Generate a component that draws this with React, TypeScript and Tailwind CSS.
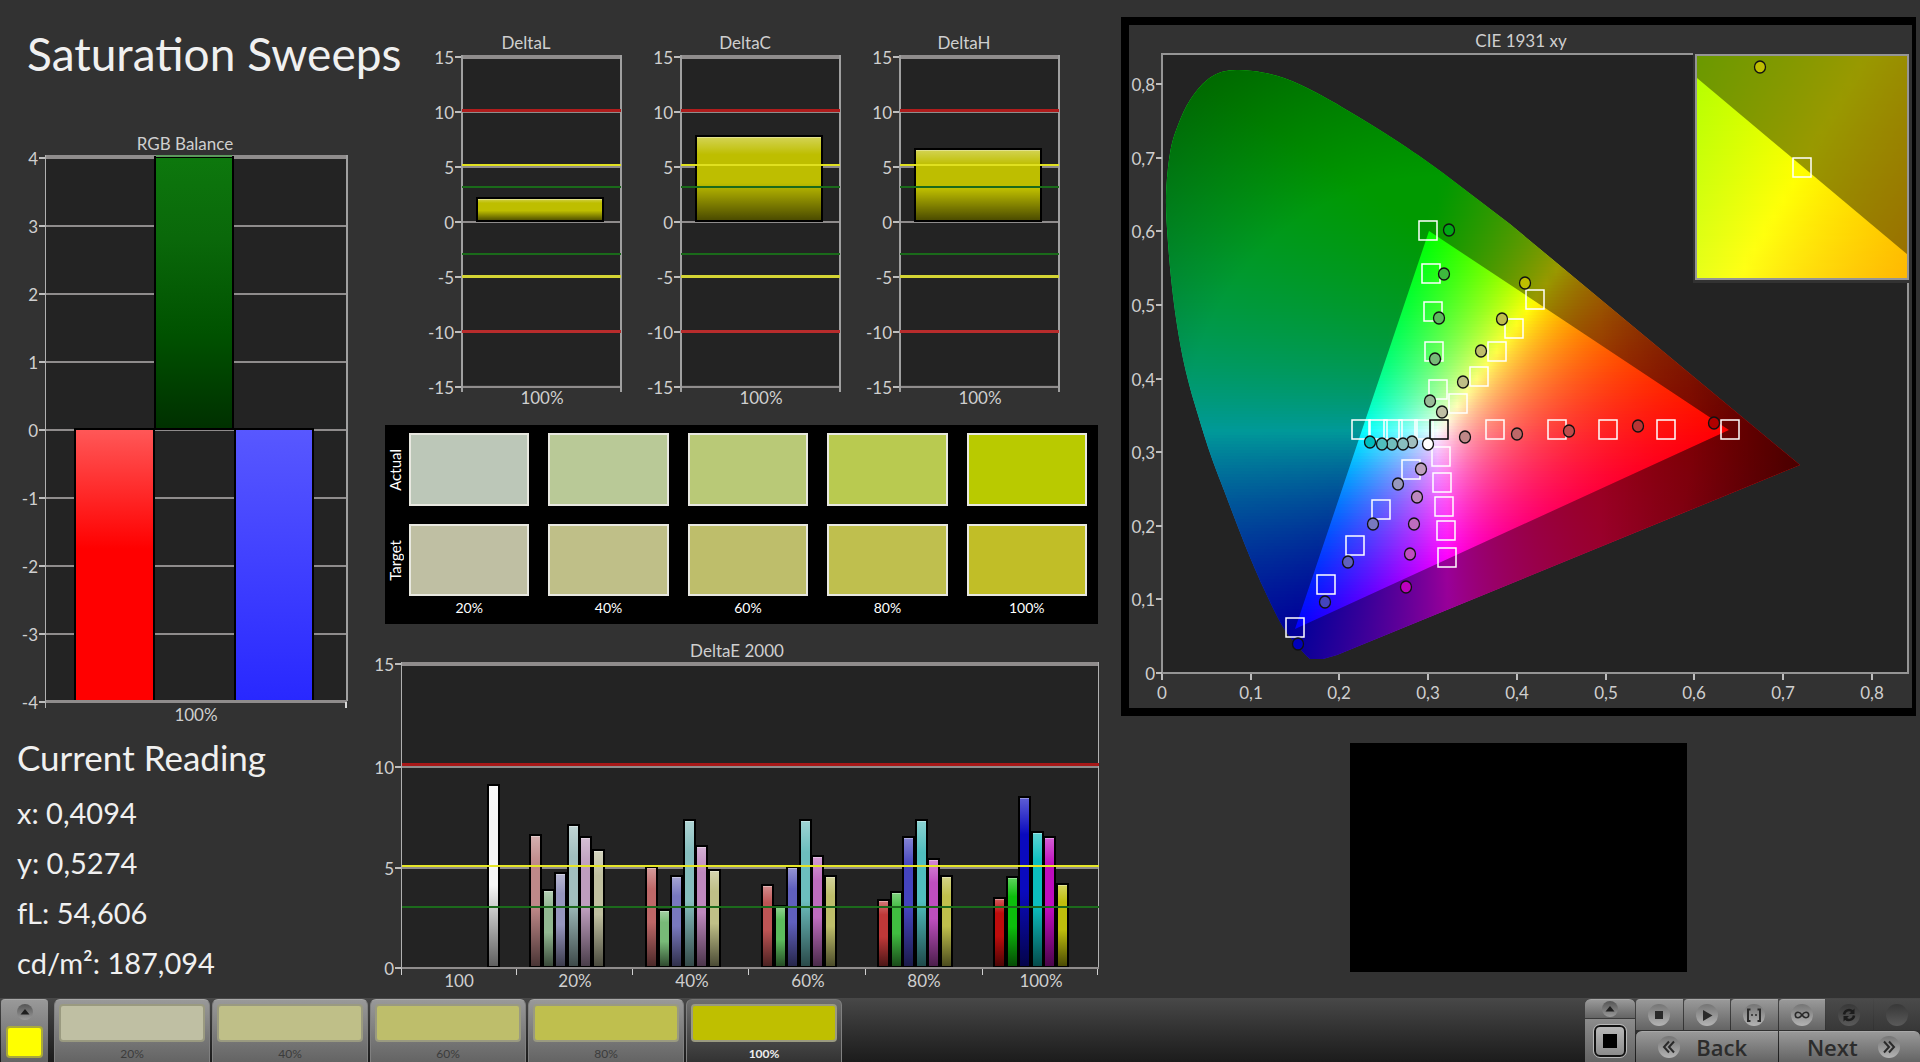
import React from "react";

type Point = [number, number];

/* ---------- shared chart pieces ---------- */

const AXIS = "#8f8c8c";
const PLOT = "#232323";

function ChartDefs() {
  return (
    <defs>
      <linearGradient id="gloss" x1="0" y1="0" x2="0" y2="1">
        <stop offset="0" stopColor="#fff" stopOpacity="0.35" />
        <stop offset="0.22" stopColor="#fff" stopOpacity="0" />
        <stop offset="0.55" stopColor="#000" stopOpacity="0" />
        <stop offset="1" stopColor="#000" stopOpacity="0.62" />
      </linearGradient>
      <linearGradient id="greenBar" x1="0" y1="0" x2="0" y2="1">
        <stop offset="0" stopColor="#0d780d" />
        <stop offset="0.3" stopColor="#0a680a" />
        <stop offset="0.65" stopColor="#005200" />
        <stop offset="1" stopColor="#003000" />
      </linearGradient>
      <linearGradient id="redBar" x1="0" y1="0" x2="0" y2="1">
        <stop offset="0" stopColor="#ff5858" />
        <stop offset="0.44" stopColor="#ff0000" />
        <stop offset="1" stopColor="#ff0000" />
      </linearGradient>
      <linearGradient id="blueBar" x1="0" y1="0" x2="0" y2="1">
        <stop offset="0" stopColor="#5858ff" />
        <stop offset="1" stopColor="#2828ff" />
      </linearGradient>
    </defs>
  );
}

function Bar({ x, y, w, bottom, color }: { x: number; y: number; w: number; bottom: number; color: string }) {
  return (
    <g>
      <rect x={x} y={y} width={w} height={bottom - y} fill={color} />
      <rect x={x} y={y} width={w} height={bottom - y} fill="url(#gloss)" stroke="#000" strokeWidth="2" />
      <rect x={x + 1} y={y + 1} width={w - 2} height="1" fill="#fff" opacity="0.35" />
    </g>
  );
}

function YLabel({ x, y, children }: { x: number; y: number; children: React.ReactNode }) {
  return (
    <g>
      <text x={x - 8} y={y + 7} textAnchor="end">
        {children}
      </text>
      <rect x={x - 7} y={y - 1} width="7" height="2" fill="#bdbdbd" />
    </g>
  );
}

/* ---------- RGB balance ---------- */

function RgbBalance() {
  const zero = 430;
  const step = 68;
  const ticks = [4, 3, 2, 1, 0, -1, -2, -3, -4];
  return (
    <svg viewBox="0 130 372 600" className="block w-full fill-[#cfcfcf] text-[17px]" role="img" aria-label="RGB Balance">
      <text x="185" y="150" textAnchor="middle">
        RGB Balance
      </text>
      <rect x="46" y="157" width="301" height="545" fill={PLOT} />
      {ticks.map((t) => (
        <g key={t}>
          <rect x="46" y={zero - t * step - 1} width="301" height="2" fill={AXIS} />
          <YLabel x={46} y={zero - t * step}>
            {t}
          </YLabel>
        </g>
      ))}
      <rect x="46" y="155" width="301" height="3" fill={AXIS} />
      <rect x="155" y="157" width="78" height="272" fill="url(#greenBar)" stroke="#000" strokeWidth="2" />
      <rect x="156" y="155" width="76" height="2" fill="#5d9a5d" />
      <rect x="75" y="429" width="79" height="272" fill="url(#redBar)" stroke="#000" strokeWidth="2" />
      <rect x="235" y="429" width="78" height="272" fill="url(#blueBar)" stroke="#000" strokeWidth="2" />
      <rect x="45" y="155" width="1" height="553" fill="#b0b0b0" />
      <rect x="346" y="155" width="2" height="546" fill="#a0a0a0" />
      <rect x="345" y="700" width="2" height="8" fill="#d8d8d8" />
      <rect x="46" y="700" width="301" height="2" fill={AXIS} />
      <text x="196" y="721" textAnchor="middle">
        100%
      </text>
    </svg>
  );
}

/* ---------- DeltaL / DeltaC / DeltaH ---------- */

function DeltaPlot({ x, title, top }: { x: number; title: string; top: number }) {
  const ticks = [15, 10, 5, 0, -5, -10, -15];
  return (
    <g>
      <text x={x + 64} y="49" textAnchor="middle">
        {title}
      </text>
      <rect x={x} y="56" width="159" height="329" fill={PLOT} />
      {ticks.map((t) => (
        <g key={t}>
          <rect x={x} y={222 - t * 11 - 1} width="159" height="2" fill={AXIS} />
          <YLabel x={x} y={222 - t * 11}>
            {t}
          </YLabel>
        </g>
      ))}
      <rect x={x} y="55" width="159" height="4" fill={AXIS} />
      <rect x={x - 1} y="55" width="2" height="337" fill="#a0a0a0" />
      <rect x={x + 158} y="55" width="2" height="337" fill="#a0a0a0" />
      <Bar x={x + 15} y={top} w={126} bottom={221} color="#bebe00" />
      <rect x={x} y="109" width="159" height="3" fill="#b01c1c" />
      <rect x={x} y="164" width="159" height="2" fill="#e0e020" />
      <rect x={x} y="186" width="159" height="2" fill="#1a6a1a" />
      <rect x={x} y="253" width="159" height="2" fill="#1a6a1a" />
      <rect x={x} y="275" width="159" height="3" fill="#d4d434" />
      <rect x={x} y="330" width="159" height="3" fill="#b82c2c" />
      <text x={x + 80} y="404" textAnchor="middle">
        100%
      </text>
    </g>
  );
}

function DeltaCharts() {
  return (
    <svg viewBox="372 0 748 425" className="block w-full fill-[#cfcfcf] text-[17px]" role="img" aria-label="DeltaL, DeltaC and DeltaH">
      <ChartDefs />
      <DeltaPlot x={462} title="DeltaL" top={198} />
      <DeltaPlot x={681} title="DeltaC" top={136} />
      <DeltaPlot x={900} title="DeltaH" top={149} />
    </svg>
  );
}

/* ---------- colour swatches ---------- */

const LEVELS = ["20%", "40%", "60%", "80%", "100%"];
const ACTUAL = ["bg-[#bcc7b8]", "bg-[#b9c997]", "bg-[#b9c977]", "bg-[#b9ca50]", "bg-[#b9ca00]"];
const TARGET = ["bg-[#bfbfa3]", "bg-[#bfbf88]", "bg-[#bebe6b]", "bg-[#bfbf4e]", "bg-[#c1be27]"];

function SwatchRow({ label, colors, height }: { label: string; colors: string[]; height: string }) {
  return (
    <div className="flex items-center">
      <div className="flex w-6 justify-center pr-1">
        <span className="rotate-180 text-[15px] leading-4 [writing-mode:vertical-rl]">{label}</span>
      </div>
      <div className="grid flex-1 grid-cols-5 gap-[19px]">
        {colors.map((c) => (
          <div key={c} className={`border-2 border-[#e8e8e0] ${height} ${c}`} />
        ))}
      </div>
    </div>
  );
}

function Swatches() {
  return (
    <section className="mr-[22px] ml-[13px] flex h-[199px] flex-col bg-black pt-2 pr-[11px] text-white">
      <SwatchRow label="Actual" colors={ACTUAL} height="h-[73px]" />
      <div className="h-[18px]" />
      <SwatchRow label="Target" colors={TARGET} height="h-[72px]" />
      <div className="ml-6 grid grid-cols-5 gap-[19px] text-center text-sm leading-6">
        {LEVELS.map((l) => (
          <span key={l}>{l}</span>
        ))}
      </div>
    </section>
  );
}

/* ---------- DeltaE 2000 ---------- */

const GROUPS: { x: number; tops: number[]; colors: string[] }[] = [
  { x: 530, tops: [835, 890, 873, 825, 837, 850], colors: ["#be8888", "#91b891", "#9696be", "#a0bebe", "#be9ebe", "#bfbf9f"] },
  { x: 646, tops: [867, 910, 876, 820, 846, 870], colors: ["#be6868", "#78ba78", "#7878be", "#86bebe", "#be88be", "#bfbf87"] },
  { x: 762, tops: [885, 906, 867, 820, 856, 876], colors: ["#be5454", "#5cbc5c", "#6060be", "#6cbebe", "#be6cbe", "#bebe6a"] },
  { x: 878, tops: [900, 892, 837, 820, 859, 876], colors: ["#be3838", "#40bc40", "#4444be", "#50bebe", "#be4ebe", "#bfbf4c"] },
  { x: 994, tops: [898, 877, 797, 832, 837, 884], colors: ["#be0c0c", "#0cbe0c", "#0a0abe", "#0cbebe", "#be0cbe", "#bebe0c"] },
];

function DeltaE() {
  const ticks: Point[] = [
    [15, 664],
    [10, 767],
    [5, 868],
    [0, 968],
  ];
  return (
    <svg viewBox="372 624 748 374" className="block w-full fill-[#cfcfcf] text-[17px]" role="img" aria-label="DeltaE 2000">
      <text x="737" y="657" textAnchor="middle">
        DeltaE 2000
      </text>
      <rect x="402" y="664" width="697" height="304" fill={PLOT} />
      {ticks.map(([t, y]) => (
        <g key={t}>
          <rect x="402" y={y - 1} width="697" height="2" fill={AXIS} />
          <YLabel x={402} y={y}>
            {t}
          </YLabel>
        </g>
      ))}
      <rect x="402" y="662" width="697" height="4" fill={AXIS} />
      <rect x="401" y="662" width="1" height="306" fill="#b0b0b0" />
      <rect x="1098" y="662" width="1" height="306" fill="#b0b0b0" />
      <Bar x={488} y={785} w={11} bottom={967} color="#f6f6f6" />
      {GROUPS.map((g) =>
        g.tops.map((top, i) => (
          <Bar key={`${g.x}-${i}`} x={g.x + Math.round(i * 12.6)} y={top} w={11} bottom={967} color={g.colors[i]} />
        )),
      )}
      <rect x="402" y="967" width="697" height="2" fill={AXIS} />
      <rect x="402" y="763" width="697" height="3" fill="#a81818" />
      <rect x="402" y="865" width="697" height="2" fill="#e6e628" />
      <rect x="402" y="906" width="697" height="2" fill="#1c6a1c" />
      {[402, 517, 633, 749, 866, 983, 1098].map((x) => (
        <rect key={x} x={x - 1} y="969" width="1" height="6" fill="#d0d0d0" />
      ))}
      {["100", ...LEVELS].map((l, i) => (
        <text key={l} x={459 + Math.round(i * 116.3)} y="987" textAnchor="middle">
          {l}
        </text>
      ))}
    </svg>
  );
}

/* ---------- CIE 1931 ---------- */

function chromaColor(x: number, y: number): string {
  const Y = Math.max(y, 0.001);
  const z = 1 - x - y;
  const lin = [
    3.2406 * x - 1.5372 * Y - 0.4986 * z,
    -0.9689 * x + 1.8758 * Y + 0.0415 * z,
    0.0557 * x - 0.204 * Y + 1.057 * z,
  ].map((v) => Math.max(v, 0));
  const top = Math.max(...lin);
  const [r, g, b] = lin.map((v) => Math.round((255 * v) / top));
  return `rgb(${r},${g},${b})`;
}

interface FieldProps {
  id: string;
  x0: number;
  x1: number;
  y0: number;
  y1: number;
  toXY: (px: number, py: number) => Point;
}

const ROW = 3;

/* Chromaticity field painted as thin rows, each with its own gradient. */
function ChromaField({ id, x0, x1, y0, y1, toXY }: FieldProps) {
  const rows: number[] = [];
  for (let y = y0; y < y1; y += ROW) rows.push(y);
  const count = Math.ceil((x1 - x0) / 10);
  const stops = Array.from({ length: count + 1 }, (_, i) => i / count);
  return (
    <g shapeRendering="crispEdges">
      {rows.map((y) => (
        <React.Fragment key={y}>
          <linearGradient id={`${id}${y}`} x1="0" x2="1" y1="0" y2="0">
            {stops.map((s) => {
              const [cx, cy] = toXY(x0 + s * (x1 - x0), y + ROW / 2);
              return <stop key={s} offset={s} stopColor={chromaColor(cx, cy)} />;
            })}
          </linearGradient>
          <rect x={x0} y={y} width={x1 - x0} height={Math.min(ROW, y1 - y)} fill={`url(#${id}${y})`} />
        </React.Fragment>
      ))}
    </g>
  );
}

const LOCUS: Point[] = [
  [1310, 659], [1302, 651], [1283, 627], [1263, 587], [1245, 545], [1225, 493], [1210, 453], [1195, 405],
  [1187, 376], [1180, 343], [1173, 296], [1168, 243], [1166, 197], [1170, 153], [1178, 125], [1190, 100],
  [1207, 80], [1226, 71], [1253, 71], [1284, 78], [1317, 93], [1357, 116], [1397, 141], [1443, 173],
  [1510, 224], [1700, 382], [1800, 465], [1337, 655], [1323, 659],
];

function locusPath(): string {
  let d = `M${LOCUS[0][0]} ${LOCUS[0][1]}`;
  for (let i = 1; i < LOCUS.length; i++) {
    const p0 = LOCUS[Math.max(i - 2, 0)];
    const p1 = LOCUS[i - 1];
    const p2 = LOCUS[i];
    const p3 = LOCUS[Math.min(i + 1, LOCUS.length - 1)];
    if (i >= 24) {
      d += `L${p2[0]} ${p2[1]}`;
    } else {
      d += `C${p1[0] + (p2[0] - p0[0]) / 6} ${p1[1] + (p2[1] - p0[1]) / 6} ${p2[0] - (p3[0] - p1[0]) / 6} ${p2[1] - (p3[1] - p1[1]) / 6} ${p2[0]} ${p2[1]}`;
    }
  }
  return d + "Z";
}

const TARGETS: Point[] = [
  [1428, 230], [1431, 273], [1433, 311], [1434, 351], [1438, 389],
  [1535, 299], [1514, 328], [1497, 351], [1479, 376], [1458, 403],
  [1361, 429], [1378, 429], [1393, 429], [1408, 429], [1424, 429],
  [1495, 429], [1557, 429], [1608, 429], [1666, 429], [1730, 429],
  [1411, 469], [1381, 509], [1355, 545], [1326, 584], [1295, 627],
  [1441, 456], [1442, 482], [1444, 506], [1446, 530], [1447, 557],
];

const READINGS: [number, number, string][] = [
  [1449, 230, "#00a814"], [1444, 274, "#3eb83e"], [1439, 318, "#5cba5c"], [1435, 359, "#78ba78"], [1430, 401, "#98ba98"],
  [1525, 283, "#bebe00"], [1502, 319, "#bebe4c"], [1481, 351, "#bebe6a"], [1463, 382, "#bebe86"], [1442, 412, "#bebea4"],
  [1412, 442, "#a0bebe"], [1403, 444, "#88bebe"], [1392, 444, "#70bebe"], [1382, 444, "#50bebe"], [1370, 442, "#00bebe"],
  [1465, 437, "#be8888"], [1517, 434, "#be6868"], [1569, 431, "#be4c4c"], [1638, 426, "#b83434"], [1714, 423, "#b00000"],
  [1398, 484, "#9898be"], [1373, 524, "#7878be"], [1348, 562, "#6060be"], [1325, 602, "#4444be"], [1298, 644, "#0000b8"],
  [1421, 469, "#bea0be"], [1417, 497, "#be88be"], [1414, 524, "#be6cbe"], [1410, 554, "#be4ebe"], [1406, 587, "#be00be"],
  [1428, 444, "#ffffff"],
];

function Target({ x, y, color = "#fff" }: { x: number; y: number; color?: string }) {
  return <rect x={x - 9} y={y - 9} width="18" height="19" fill="none" stroke={color} strokeWidth="1.5" />;
}

function Reading({ x, y, color }: { x: number; y: number; color: string }) {
  return <ellipse cx={x} cy={y} rx="5.5" ry="6" fill={color} stroke="#111" strokeWidth="1.3" />;
}

function CieChart() {
  const locus = locusPath();
  const tenths = [0, 1, 2, 3, 4, 5, 6, 7, 8];
  const name = (t: number) => (t === 0 ? "0" : `0,${t}`);
  return (
    <svg viewBox="1129 25 783 683" className="block w-full fill-[#cfcfcf] text-[17px]" role="img" aria-label="CIE 1931 xy">
      <defs>
        <clipPath id="locus">
          <path d={locus} />
        </clipPath>
        <radialGradient id="shade" gradientUnits="userSpaceOnUse" cx="1440" cy="430" r="460">
          <stop offset="0" stopOpacity="0.4" />
          <stop offset="0.55" stopOpacity="0.4" />
          <stop offset="1" stopOpacity="0.63" />
        </radialGradient>
        <linearGradient id="redShade" gradientUnits="userSpaceOnUse" x1="1600" x2="1800" y1="0" y2="0">
          <stop offset="0" stopOpacity="0" />
          <stop offset="1" stopOpacity="0.4" />
        </linearGradient>
      </defs>
      <text x="1521" y="47" textAnchor="middle">
        CIE 1931 xy
      </text>
      <rect x="1162" y="54" width="746" height="619" fill={PLOT} stroke="#959595" strokeWidth="2" />
      <g clipPath="url(#locus)">
        <ChromaField id="cie" x0={1160} x1={1804} y0={69} y1={663} toXY={(px, py) => [(px - 1162) / 886, (673 - py) / 736]} />
        <path d={`${locus}M1429 231L1729 430L1295 629Z`} fillRule="evenodd" fill="url(#shade)" />
        <path d={`${locus}M1429 231L1729 430L1295 629Z`} fillRule="evenodd" fill="url(#redShade)" />
      </g>
      {TARGETS.map(([x, y]) => (
        <Target key={`${x}-${y}`} x={x} y={y} />
      ))}
      <Target x={1439} y={429} color="#000" />
      {READINGS.map(([x, y, c]) => (
        <Reading key={`${x}-${y}`} x={x} y={y} color={c} />
      ))}

      {tenths.map((t) => (
        <g key={t}>
          <text x="1155" y={680 - Math.round(t * 73.6)} textAnchor="end">
            {name(t)}
          </text>
          <rect x="1156" y={672 - Math.round(t * 73.6)} width="6" height="2" fill="#bdbdbd" />
          <text x={1162 + Math.round(t * 88.7)} y="699" textAnchor="middle">
            {name(t)}
          </text>
          <rect x={1161 + Math.round(t * 88.7)} y="674" width="2" height="6" fill="#bdbdbd" />
        </g>
      ))}

      <rect x="1693" y="52" width="217" height="231" fill="#323232" />
      <ChromaField
        id="zoom"
        x0={1697}
        x1={1908}
        y0={56}
        y1={278}
        toXY={(px, py) => [0.4193 + (px - 1802) / 4313, 0.5053 - (py - 167) / 4530]}
      />
      <path d="M1697 56H1908V255L1697 78Z" fillOpacity="0.4" fill="#000" />
      <rect x="1696" y="55" width="212" height="224" fill="none" stroke="#959595" strokeWidth="2" />
      <Target x={1802} y={167} />
      <Reading x={1760} y={67} color="#bebe00" />
    </svg>
  );
}

/* ---------- bottom bar ---------- */

function Knob({ children, dim = false }: { children?: React.ReactNode; dim?: boolean }) {
  return (
    <span
      className={`flex size-[22px] items-center justify-center rounded-full ${
        dim ? "bg-linear-to-b from-[#383838] to-[#5a5a5a] text-[#1c1c1c]" : "bg-linear-to-b from-[#757575] to-[#b4b4b4] text-[#2a2a2a]"
      }`}
    >
      <svg viewBox="0 0 22 22" className="size-[22px]" fill="none" stroke="currentColor" strokeWidth="2">
        {children}
      </svg>
    </span>
  );
}

function UpKnob() {
  return (
    <span className="flex size-4 items-center justify-center rounded-full bg-linear-to-b from-[#555] to-[#9a9a9a]">
      <svg viewBox="0 0 16 16" className="size-4">
        <path d="M3.500 10.500L8 5L12.500 10.500Z" fill="#1e1e1e" />
      </svg>
    </span>
  );
}

const PATCHES = [
  { label: "20%", color: "bg-[#bfbfa3]" },
  { label: "40%", color: "bg-[#bfbf88]" },
  { label: "60%", color: "bg-[#bebe6b]" },
  { label: "80%", color: "bg-[#bfbf4e]" },
  { label: "100%", color: "bg-[#bfbf00]" },
];

const RAISED = "border-t border-[#a8a8a8] bg-linear-to-b from-[#999] to-[#646464]";

function Toolbar() {
  const transport: { name: string; icon: React.ReactNode; dim?: boolean }[] = [
    { name: "Stop", icon: <path d="M7 7h8v8H7Z" fill="currentColor" stroke="none" /> },
    { name: "Play", icon: <path d="M7 6L16.500 11.500L7 17Z" fill="currentColor" stroke="none" /> },
    {
      name: "Measure range",
      icon: (
        <>
          <path d="M7.500 5.500H5V17h2.500M14.500 5.500H17V17h-2.500" />
          <path d="M8 11h2M12 11h2" strokeWidth="1.500" />
        </>
      ),
    },
    {
      name: "Loop",
      icon: (
        <path
          d="M11 11C9.500 9 8.500 8.300 7 8.300a2.700 2.700 0 0 0 0 5.400c1.500 0 2.500-.700 4-2.700s2.500-2.700 4-2.700a2.700 2.700 0 0 1 0 5.400c-1.500 0-2.500-.700-4-2.700Z"
          strokeWidth="1.600"
        />
      ),
    },
    {
      name: "Refresh",
      dim: true,
      icon: (
        <>
          <path d="M6 10.500a5 5 0 0 1 8.500-3M16 11.500a5 5 0 0 1-8.500 3" strokeWidth="2.500" />
          <path d="M16.500 4.500v5.500h-5.500ZM5.500 17.500V12H11Z" fill="currentColor" stroke="none" />
        </>
      ),
    },
    { name: "Record", dim: true, icon: null },
  ];
  return (
    <footer className="flex h-16 justify-between bg-linear-to-b from-[#484848] to-[#1c1c1c] pt-px">
      <div className="flex gap-[2px] pl-px">
        <button
          aria-label="Current color"
          className={`mr-1 flex w-[47px] flex-col items-center justify-between rounded-t-sm pt-1 pb-1 ${RAISED}`}
        >
          <UpKnob />
          <span className="h-8 w-[37px] rounded-sm border-2 border-[#a9a93c] bg-[#ffff00]" />
        </button>
        {PATCHES.map((p, i) => (
          <button
            key={p.label}
            className={`flex w-[156px] flex-col items-center rounded-t-md border-x border-x-[#808080] pt-1 ${
              i === 4
                ? "border-t border-[#777] bg-linear-to-b from-[#6e6e6e] to-[#333] font-bold text-[#eee]"
                : `text-[#3c3c3c] ${RAISED}`
            }`}
          >
            <span className={`h-[38px] w-[146px] rounded-sm border-2 border-[#9a9a80] ${p.color}`} />
            <span className="mt-1 text-xs leading-4">{p.label}</span>
          </button>
        ))}
      </div>
      <div className="flex gap-px">
        <div className="flex w-[50px] flex-col gap-px">
          <button aria-label="Expand" className={`flex h-[19px] items-center justify-center rounded-t-md ${RAISED}`}>
            <UpKnob />
          </button>
          <button aria-label="Pattern window" className="flex flex-1 items-center justify-center bg-linear-to-b from-[#8c8c8c] to-[#646464]">
            <span className="flex size-8 items-center justify-center rounded-md border-2 border-[#111] bg-linear-to-b from-[#b8b8b8] to-[#8c8c8c] outline outline-[#b8b8b8]">
              <span className="size-[14px] bg-black" />
            </span>
          </button>
        </div>
        <div className="flex w-[284px] flex-col gap-px">
          <div className="grid h-[31px] grid-cols-6 gap-px">
            {transport.map((t) => (
              <button
                key={t.name}
                aria-label={t.name}
                className={`flex items-center justify-center ${
                  t.dim ? "bg-linear-to-b from-[#4a4a4a] to-[#383838]" : `rounded-tl-sm ${RAISED}`
                }`}
              >
                <Knob dim={t.dim}>{t.icon}</Knob>
              </button>
            ))}
          </div>
          <div className="grid flex-1 grid-cols-2 gap-px font-['Open_Sans',sans-serif] text-[22px] leading-7 font-semibold text-[#2c2c2c]">
            <button className={`flex items-center justify-center gap-4 rounded-tl-md pr-2 ${RAISED}`}>
              <Knob>
                <path d="M11 5.500L6 11L11 16.500M16 5.500L11 11L16 16.500" />
              </Knob>
              Back
            </button>
            <button className={`flex items-center justify-center gap-5 rounded-tr-md pl-2 ${RAISED}`}>
              Next
              <Knob>
                <path d="M6 5.500L11 11L6 16.500M11 5.500L16 11L11 16.500" />
              </Knob>
            </button>
          </div>
        </div>
      </div>
    </footer>
  );
}

/* ---------- page ---------- */

export default function App() {
  return (
    <div className="flex min-h-screen flex-col bg-[#323232] font-[Lato,'Liberation_Sans',sans-serif] text-[#f0f0f0]">
      <main className="grid flex-1 grid-cols-[minmax(0,372fr)_minmax(0,748fr)_minmax(0,800fr)] items-start">
        <div>
          <h1 className="pt-[22px] pb-11 pl-[27px] text-[46px] leading-16 whitespace-nowrap">Saturation Sweeps</h1>
          <RgbBalance />
          <section className="pl-[17px] text-[29px] leading-[50px] whitespace-nowrap">
            <h2 className="pb-1 text-[35px] leading-[54px]">Current Reading</h2>
            <p>x: 0,4094</p>
            <p>y: 0,5274</p>
            <p>fL: 54,606</p>
            <p>cd/m²: 187,094</p>
          </section>
        </div>
        <div>
          <DeltaCharts />
          <Swatches />
          <DeltaE />
        </div>
        <div className="pt-[17px] pr-1 pl-px">
          <div className="border-8 border-r-4 border-black">
            <CieChart />
          </div>
          <div className="mx-auto mt-[27px] aspect-[337/229] w-[337px] bg-black" />
        </div>
      </main>
      <Toolbar />
    </div>
  );
}
